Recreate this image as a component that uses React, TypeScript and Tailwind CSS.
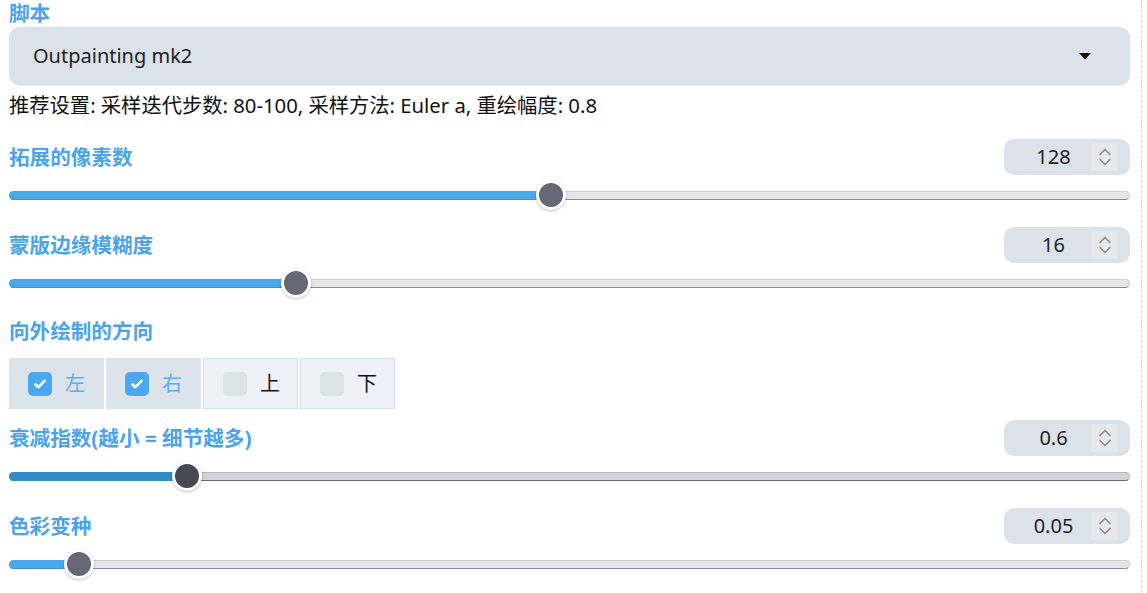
import React from "react";

const FONT = { fontFamily: '"Noto Sans", "Noto Sans CJK SC", sans-serif' };

function NumberBox({ value }: { value: string }) {
  return (
    <div className="flex h-[36px] w-[126px] items-center rounded-[10px] bg-[#dbe2e9] pl-[12px] pr-[12px]">
      <span className="flex-1 text-center text-[20px] leading-none text-[#1f1f1f]">{value}</span>
      <div className="flex h-[28px] w-[27px] flex-col items-center justify-center bg-[#e6e8ee]">
        <svg width="14" height="22" viewBox="0 0 14 22" fill="none" stroke="#8c8c96" strokeWidth="1.7" strokeLinecap="round" strokeLinejoin="round">
          <path d="M2 8.5 L7 3.5 L12 8.5" />
          <path d="M2 13.5 L7 18.5 L12 13.5" />
        </svg>
      </div>
    </div>
  );
}

function Slider({ pct, active }: { pct: number; active?: boolean }) {
  const fill = active ? "bg-[#3289c7]" : "bg-[#4aa8ea]";
  const track = active ? "bg-[#d2d2d8] border-[#b5b5be] border-b-[#6a6a75]" : "bg-[#e5e5ea] border-[#cdcdd4] border-b-[#8b8b96]";
  const thumb = active ? "bg-[#474752]" : "bg-[#676775]";
  return (
    <div className="relative flex h-[40px] items-center">
      <div className={`relative h-[9px] w-full rounded-full border ${track}`}>
        <div className={`absolute left-[-1px] top-[-1px] h-[9px] rounded-full ${fill} border-b border-[#3a8fcc]`} style={{ width: `${pct}%` }} />
      </div>
      <div
        className={`absolute top-1/2 h-[30px] w-[30px] -translate-x-1/2 -translate-y-1/2 rounded-full border-[3px] border-white ${thumb} shadow-[0_1px_3px_rgba(0,0,0,0.25)]`}
        style={{ left: `${pct}%` }}
      />
    </div>
  );
}

function Label({ children }: { children: React.ReactNode }) {
  return <span className="text-[20.6px] font-bold leading-none text-[#4ba3ea]">{children}</span>;
}

function SliderBlock({ label, value, pct, active, className }: { label: string; value: string; pct: number; active?: boolean; className?: string }) {
  return (
    <div className={className}>
      <div className="flex h-[36px] items-center justify-between">
        <Label>{label}</Label>
        <NumberBox value={value} />
      </div>
      <Slider pct={pct} active={active} />
    </div>
  );
}

function Check({ label, checked }: { label: string; checked: boolean }) {
  return (
    <div
      className={`flex h-[51px] w-[95px] items-center pl-[19px] ${
        checked ? "bg-[#dce3ea]" : "border border-[#d6dee8] bg-[#eef2f8] pl-[18px]"
      }`}
    >
      <div className={`flex h-[24px] w-[24px] items-center justify-center rounded-[5px] ${checked ? "bg-[#4aa9ee]" : "bg-[#dce2e9]"}`}>
        {checked && (
          <svg width="14" height="14" viewBox="0 0 14 14" fill="none" stroke="white" strokeWidth="2.6" strokeLinecap="round" strokeLinejoin="round">
            <path d="M2.5 7.5 L5.5 10.2 L11.5 3.8" />
          </svg>
        )}
      </div>
      <span className={`ml-[13px] text-[20px] leading-none ${checked ? "text-[#5aaeea]" : "text-[#111]"}`}>{label}</span>
    </div>
  );
}

export default function App() {
  return (
    <div className="h-[593px] w-[1147px] overflow-hidden bg-white" style={FONT}>
      <div className="w-[1142px] h-full border-r border-dashed border-[#d4d4d4]">
        <div className="w-[1130px] pl-[9px]">
          <div className="flex h-[27px] items-center">
            <Label>脚本</Label>
          </div>
          <div className="flex h-[58px] items-center justify-between rounded-[11px] bg-[#dbe2e9] pl-[24px] pr-[39px] shadow-[0_1px_2px_rgba(0,0,0,0.08)]">
            <span className="text-[20px] text-[#1f1f1f]">Outpainting mk2</span>
            <svg width="12" height="7" viewBox="0 0 12 7">
              <path d="M0 0 L12 0 L6 6.5 Z" fill="#111" />
            </svg>
          </div>
          <div className="mt-[8px] h-[24px] text-[20.3px] leading-[24px] text-[#111]">
            推荐设置: 采样迭代步数: 80-100, 采样方法: Euler a, 重绘幅度: 0.8
          </div>
          <SliderBlock className="mt-[22px]" label="拓展的像素数" value="128" pct={48.35} />
          <SliderBlock className="mt-[12px]" label="蒙版边缘模糊度" value="16" pct={25.6} />
          <div className="mt-[10px] flex h-[36px] items-center">
            <Label>向外绘制的方向</Label>
          </div>
          <div className="mt-[9px] flex gap-[2px]">
            <Check label="左" checked />
            <Check label="右" checked />
            <Check label="上" checked={false} />
            <Check label="下" checked={false} />
          </div>
          <SliderBlock className="mt-[11px]" label="衰减指数(越小 = 细节越多)" value="0.6" pct={15.9} active />
          <SliderBlock className="mt-[12px]" label="色彩变种" value="0.05" pct={6.25} />
        </div>
      </div>
    </div>
  );
}
